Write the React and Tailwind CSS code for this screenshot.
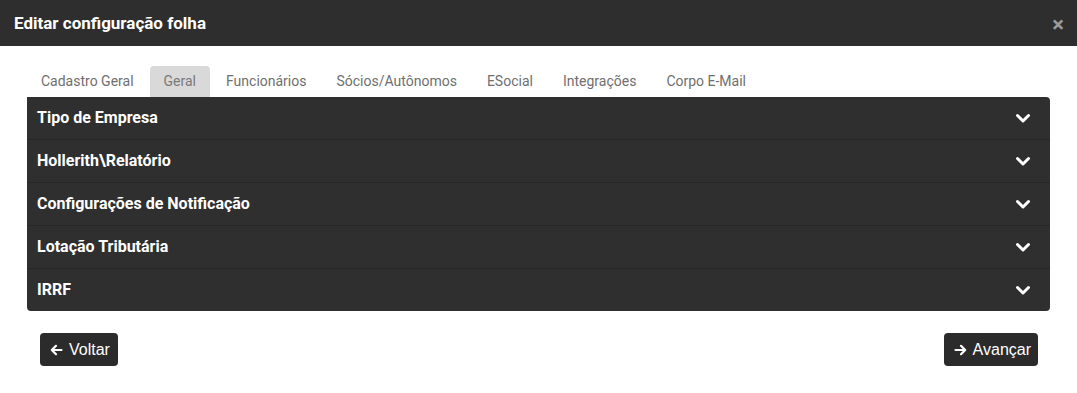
import React from 'react';

const tabs = ['Cadastro Geral', 'Geral', 'Funcionários', 'Sócios/Autônomos', 'ESocial', 'Integrações', 'Corpo E-Mail'];
const sections = ['Tipo de Empresa', 'Hollerith\\Relatório', 'Configurações de Notificação', 'Lotação Tributária', 'IRRF'];

const Chevron = () => (
  <svg width="16" height="11" viewBox="0 0 16 11" className="mr-[19px]">
    <path d="M2.5 2.5 L8 8 L13.5 2.5" fill="none" stroke="#fff" strokeWidth="3" strokeLinecap="round" strokeLinejoin="round" />
  </svg>
);

const Arrow = ({ dir }) => (
  <svg width="13" height="12" viewBox="0 0 13 12">
    {dir === 'left' ? (
      <path d="M11.5 6 H2 M6 1.8 L1.8 6 L6 10.2" fill="none" stroke="#fff" strokeWidth="2.2" strokeLinecap="round" strokeLinejoin="round" />
    ) : (
      <path d="M1.5 6 H11 M7 1.8 L11.2 6 L7 10.2" fill="none" stroke="#fff" strokeWidth="2.2" strokeLinecap="round" strokeLinejoin="round" />
    )}
  </svg>
);

const App = () => {
  return (
    <div className="w-[1077px] h-[393px] bg-white font-['Roboto',sans-serif]">
      <div className="h-[46px] bg-[#2e2e2e] flex items-center justify-between pl-[14px] pr-[13px]">
        <h1 className="text-white font-bold text-[17px] mt-[1px]">Editar configuração folha</h1>
        <span className="text-[#9a9a9a] font-bold text-[22px] leading-none mt-[4px]">×</span>
      </div>

      <div className="px-[27px] pt-[20px]">
        <div className="flex items-end h-[31px]">
          {tabs.map((t) => (
            <div
              key={t}
              className={`h-[31px] px-[14px] mr-[2px] flex items-center text-[14px] rounded-t-[4px] ${
                t === 'Geral' ? 'bg-[#d9d9d9] text-[#7a7a7a]' : 'text-[#6f6f6f]'
              }`}
            >
              {t}
            </div>
          ))}
        </div>

        <div className="bg-[#2f2f2f] rounded-[4px] rounded-tl-none w-[1023px]">
          {sections.map((s, i) => (
            <div
              key={s}
              className={`flex items-center justify-between pl-[10px] ${
                i < sections.length - 1 ? 'h-[43px] border-b border-[#262626]' : 'h-[42px]'
              }`}
            >
              <span className="text-white font-bold text-[16px]">{s}</span>
              <Chevron />
            </div>
          ))}
        </div>

        <div className="flex justify-between mt-[22px] pl-[13px] pr-[12px] font-['Liberation_Sans',Arial,sans-serif]">
          <button className="h-[33px] pl-[10px] pr-[8px] bg-[#2b2b2b] text-white text-[16px] rounded-[4px] flex items-center gap-[6px]">
            <Arrow dir="left" />
            Voltar
          </button>
          <button className="h-[33px] pl-[10px] pr-[7px] bg-[#2b2b2b] text-white text-[16px] rounded-[4px] flex items-center gap-[6px]">
            <Arrow dir="right" />
            Avançar
          </button>
        </div>
      </div>
    </div>
  );
};

export default App;
